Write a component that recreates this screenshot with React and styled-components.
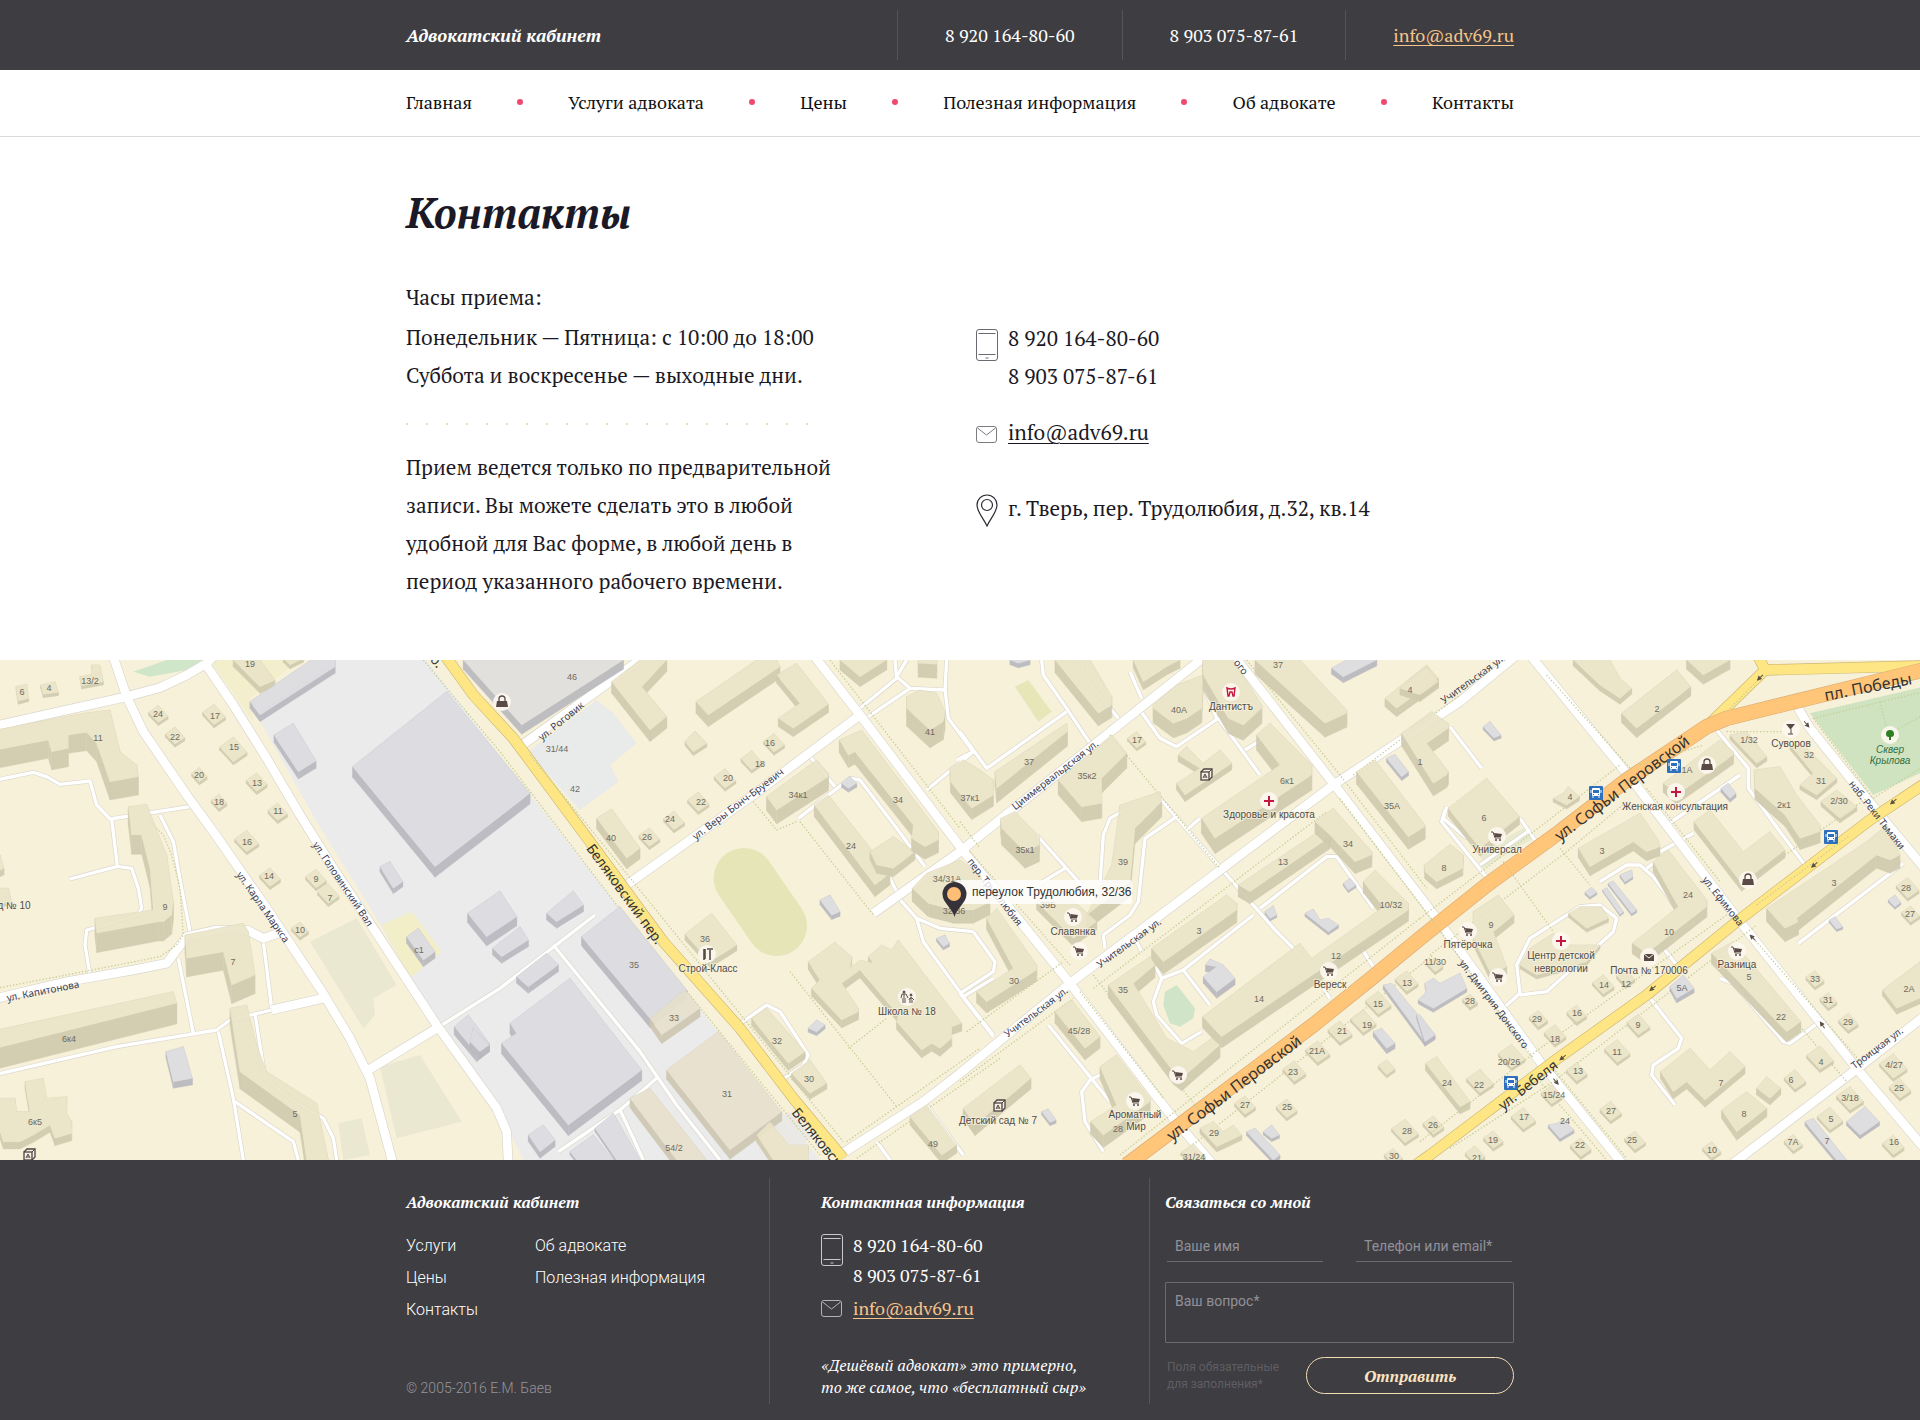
import React from 'react';
import styled, { createGlobalStyle, css } from 'styled-components';

const serif = '"PT Serif", "Liberation Serif", serif';
const sans = 'Roboto, "Liberation Sans", sans-serif';
const ink = '#1b1925';
const dark = '#3e3d42';
const sand = '#f6c58a';

const GlobalStyle = createGlobalStyle`
  *, *::before, *::after { box-sizing: border-box; }
  body { margin: 0; background: #fff; color: ${ink}; font-family: ${serif}; }
  h1, h2, p, ul { margin: 0; padding: 0; }
  ul { list-style: none; }
  a { color: inherit; text-decoration: none; }
`;

const Container = styled.div`
  max-width: 1108px;
  margin: 0 auto;
`;

/* ---------- header ---------- */

const TopBar = styled.header`
  background: ${dark};
  color: #fff;
`;

const TopInner = styled(Container)`
  display: flex;
  align-items: center;
  height: 70px;
`;

const Brand = styled.a`
  flex: 1;
  font-size: 18px;
  font-weight: 700;
  font-style: italic;
  line-height: 24px;
`;

const TopContact = styled.a`
  display: flex;
  align-items: center;
  height: 50px;
  padding: 0 ${({ $last }) => ($last ? 0 : 47)}px 0 47px;
  border-left: 1px solid #55545a;
  font-size: 18px;
  white-space: nowrap;
`;

const MailText = styled.span`
  color: ${({ $color }) => $color || sand};
  text-decoration: underline;
  text-decoration-thickness: 1px;
  text-underline-offset: 3px;
`;

const Nav = styled.nav`
  border-bottom: 1px solid #d9dadb;
`;

const NavList = styled(Container).attrs({ as: 'ul' })`
  display: flex;
  align-items: center;
  justify-content: space-between;
  height: 66px;
  padding-bottom: 2px;
  font-size: 18px;
  color: #111;
`;

const Dot = styled.li`
  width: 6px;
  height: 6px;
  border-radius: 50%;
  background: #f0486e;
`;

/* ---------- contacts ---------- */

const Main = styled(Container).attrs({ as: 'main' })`
  padding: 45px 0 60px;
`;

const Title = styled.h1`
  font-size: 42px;
  line-height: 60px;
  font-style: italic;
  font-weight: 700;
`;

const Columns = styled.div`
  display: grid;
  grid-template-columns: 570px 1fr;
  margin-top: 36px;
  font-size: 21px;
  line-height: 38px;
`;

const Lead = styled.p`
  margin-bottom: 2px;
`;

const DottedRule = styled.div`
  width: 410px;
  height: 2px;
  margin: 29px 0 23px;
  background: repeating-linear-gradient(90deg, #eddcb4 0 2px, transparent 2px 20px);
`;

const Notice = styled.p`
  max-width: 436px;
`;

const ContactList = styled.ul`
  padding-top: 41px;
`;

const ContactItem = styled.li`
  display: flex;
  gap: 10px;
  margin-bottom: ${({ $gap }) => $gap || 0}px;

  svg {
    flex: none;
    margin-top: ${({ $iconTop }) => $iconTop}px;
  }
`;

/* ---------- map ---------- */

const MapBox = styled.section`
  height: 500px;
  overflow: hidden;

  svg {
    display: block;
    width: 100%;
    height: 100%;
  }
`;

const HouseNumber = styled.text`
  font-family: "Liberation Sans", sans-serif;
  font-size: 9px;
  fill: #6d6a62;
  text-anchor: middle;
`;

const PlaceName = styled.text`
  font-family: "Liberation Sans", sans-serif;
  font-size: 10px;
  fill: #4f4b4b;
  text-anchor: middle;
  paint-order: stroke;
  stroke: #f7f1dacc;
  stroke-width: 2px;
  ${({ $park }) => $park && css`
    fill: #2f7040;
    font-style: italic;
    stroke: #cfe3c5;
  `}
`;

const StreetName = styled.text`
  font-family: "Noto Sans", "Open Sans", sans-serif;
  font-size: ${({ $size }) => $size}px;
  fill: ${({ $size }) => ($size > 10 ? '#333' : '#3d3d52')};
  text-anchor: middle;
`;

const MarkerText = styled.text`
  font-family: "Liberation Sans", sans-serif;
  font-size: 12px;
  fill: #333;
`;

/* ---------- footer ---------- */

const Footer = styled.footer`
  background: ${dark};
  color: #fff;
`;

const FooterInner = styled(Container)`
  display: grid;
  grid-template-columns: 363px 380px 1fr;
  padding: 18px 0 16px;
`;

const FooterCol = styled.section`
  display: flex;
  flex-direction: column;
  min-height: 226px;
  padding: 12px 0 6px ${({ $left }) => $left || 0}px;
  border-left: ${({ $left }) => ($left ? '1px solid #55545a' : '0')};
`;

const FooterTitle = styled.h2`
  margin-bottom: 16px;
  font-size: 16px;
  line-height: 24px;
  font-style: italic;
  font-weight: 700;
`;

const FooterLinks = styled.ul`
  display: grid;
  grid-template-columns: 129px 1fr;
  font-family: ${sans};
  font-weight: 300;
  font-size: 16px;
  line-height: 32px;
`;

const Copyright = styled.p`
  margin-top: auto;
  color: #96959d;
  font-family: ${sans};
  font-weight: 300;
  font-size: 14px;
  line-height: 20px;
`;

const FooterContacts = styled.ul`
  font-size: 18px;
  line-height: 30px;
`;

const Quote = styled.p`
  margin-top: auto;
  font-size: 16px;
  line-height: 22px;
  font-style: italic;
`;

const Form = styled.form`
  display: flex;
  flex-direction: column;
  flex: 1;
`;

const FieldRow = styled.div`
  display: flex;
  gap: 33px;
  padding: 0 2px;
`;

const field = css`
  display: block;
  width: 100%;
  padding: 0 8px;
  background: none;
  color: #fff;
  font-family: ${sans};
  font-size: 14px;
  outline: 0;

  &::placeholder {
    color: #929198;
    opacity: 1;
  }
`;

const Input = styled.input`
  ${field}
  min-width: 0;
  height: 32px;
  border: 0;
  border-bottom: 1px solid #6b6a70;
`;

const Textarea = styled.textarea`
  ${field}
  height: 61px;
  margin-top: 20px;
  padding: 8px 9px;
  border: 1px solid #6b6a70;
  border-radius: 1px;
  line-height: 20px;
  resize: none;
`;

const SubmitRow = styled.div`
  display: flex;
  align-items: center;
  justify-content: space-between;
  margin-top: 14px;
  padding-left: 2px;
`;

const Hint = styled.p`
  color: #5f5e64;
  font-family: ${sans};
  font-size: 12px;
  line-height: 17px;
`;

const Submit = styled.button`
  width: 208px;
  height: 37px;
  border: 1px solid #f5ddb4;
  border-radius: 19px;
  background: none;
  color: #fbe3c0;
  font-family: ${serif};
  font-size: 16px;
  font-weight: 700;
  font-style: italic;
  cursor: pointer;
`;

/* ---------- icons ---------- */

const PhoneIcon = ({ color = '#6b6a72' }) => (
  <svg width="22" height="32" viewBox="0 0 22 32" fill="none" stroke={color} aria-hidden="true">
    <rect x="0.5" y="0.5" width="21" height="31" rx="2.5" />
    <path d="M2.5 4.5h17M2.5 25.5h17M9.5 29h3" />
  </svg>
);

const MailIcon = ({ color = '#7c7b82' }) => (
  <svg width="22" height="18" viewBox="0 0 22 18" fill="none" stroke={color} aria-hidden="true">
    <rect x="0.5" y="0.5" width="20" height="16" rx="2.5" />
    <path d="M1.5 2l9 7 9-7" />
  </svg>
);

const PinIcon = () => (
  <svg width="22" height="33" viewBox="0 0 22 33" fill="none" stroke="#2b2a33" strokeWidth="1.2" aria-hidden="true">
    <path d="M11 32C8 25 1 18 1 11a10 10 0 0 1 20 0c0 7-7 14-10 21z" />
    <circle cx="11" cy="11" r="5.5" />
  </svg>
);

/* ---------- map data: every tile is drawn at 3x, x is its left edge ---------- */

const tiles = [
  {
    x: 0,
    areas: [
      ['1010,15 1280,15 1440,225 1850,750 2460,1515 1570,1515 1500,1370 1310,1110 1145,815 950,500 770,180', '#ebebeb'],
      ['630,15 900,15 750,130 760,200', '#f3eecb'],
      ['930,860 1070,790 1190,990 1120,1030 1125,1080 1090,1120', '#eae8d0'],
      ['1140,1235 1260,1200 1385,1400 1190,1450', '#eae8d0'],
      ['1015,1405 1085,1390 1110,1500 1030,1515', '#eae8d0'],
      ['400,50 500,15 610,15 560,45 450,65', '#cfe6c8'],
      ['1145,810 1235,770 1325,890 1230,970', '#f2eec8'],
    ],
    minor: [
      '-10,375 100,352 140,365 180,388 270,378 290,450 330,492 570,455',
      '335,492 352,632',
      '210,672 352,634 395,640 415,700 425,760 415,780 300,815 260,825 255,870 270,960',
      '480,480 520,560 545,700 570,830',
      '535,910 580,1135',
      '-10,1258 350,1175 650,1125 690,1095 815,1065',
      '790,860 815,1060',
      '655,1130 700,1330 730,1515',
      '705,1340 880,1460 895,1515',
      '765,1075 795,1270 870,1330 970,1390 1000,1450 1010,1515',
      '1310,1120 1500,1000 1785,780',
    ],
    major: [
      '-10,212 200,165 380,125 480,98 560,60 620,25 640,5',
      '340,5 380,125 430,230 560,420 640,530 800,760 960,1000 1050,1150 1110,1270 1180,1530',
      '615,25 700,150 800,310 900,480 1000,640 1120,820 1310,1110 1440,1290 1490,1360 1520,1430 1525,1530',
      '-10,1030 200,980 400,945 500,925 560,845 650,825 740,825 790,850 850,830',
      '1105,1245 1310,1120',
      '815,1065 970,1030',
    ],
    yellow: [],
    orange: [],
    dots: [
      '-10,1000 250,950 480,905 530,870 550,840 540,700 515,600 490,540 440,490',
      '1270,15 1340,100 1500,290 1850,750 2460,1500',
    ],
    buildings: [
      ['-10,225 250,175 330,165 360,290 410,330 415,365 330,380 290,265 260,232 205,240 205,280 155,290 145,255 -10,285', 55],
      ['385,455 440,448 500,600 520,740 515,780 490,800 475,800 290,835 285,790 460,765 450,640 425,540 395,540', 58],
      ['555,840 730,805 745,830 765,960 695,990 670,890 560,910', 56],
      ['-10,1125 520,1010 530,1045 -10,1180', 62],
      ['690,1060 740,1050 770,1170 800,1250 950,1345 985,1515 920,1515 900,1380 720,1250', 52],
      ['75,1280 130,1270 140,1330 200,1325 200,1375 215,1400 215,1435 165,1450 150,1410 100,1440 60,1460 10,1460 -10,1400 -10,1330 45,1330 50,1370 90,1370', 22],
      ['700,15 780,15 825,75 780,95', 20],
      ['850,10 910,10 870,30', 12],
      ['-10,600 0,600 12,640 -10,650', 20],
      ['-10,700 25,700 35,740 -10,750', 10],
      ['750,140 940,10 1005,15 1005,35 780,180', 20, 'grey'],
      ['822,240 880,205 948,318 895,350', 22, 'grey'],
      ['1058,335 1340,110 1590,415 1305,635', 32, 'grey'],
      ['1140,635 1170,620 1208,680 1180,700', 16, 'grey'],
      ['1403,775 1500,708 1550,785 1460,845', 28, 'grey'],
      ['1220,845 1255,820 1305,890 1270,915', 20, 'grey'],
      ['1363,1115 1405,1080 1468,1165 1430,1195', 25, 'grey'],
      ['498,1190 550,1175 577,1270 520,1280', 20, 'grey'],
      ['48,95 80,88 86,130 55,138', 10],
      ['122,90 165,80 175,112 130,118', 10],
      ['240,65 275,58 275,30 300,30 310,80 245,92', 10],
    ],
    houses: [[475, 178], [525, 243], [642, 180, 38], [700, 285, 46], [598, 360, 26], [770, 383, 34], [657, 440, 26], [833, 472, 32], [740, 560, 40], [810, 668, 34], [948, 672, 34], [985, 718, 36], [900, 825, 28]],
    numbers: [[67, 112, '6'], [148, 100, '4'], [269, 77, '13/2'], [475, 178, '24'], [525, 246, '22'], [644, 184, '17'], [702, 276, '15'], [598, 359, '20'], [770, 384, '13'], [657, 440, '18'], [833, 467, '11'], [741, 561, '16'], [806, 663, '14'], [948, 673, '9'], [991, 730, '7'], [900, 825, '10'], [295, 248, '11'], [494, 757, '9'], [699, 920, '7'], [206, 1152, '6к4'], [106, 1400, '6к5'], [886, 1378, '5'], [749, 27, '19'], [1257, 884, 'с1']],
    places: [[42, 752, 'д № 10']],
    streets: [[790, 755, 55, 'ул. Карла Маркса'], [1028, 688, 56, 'ул. Головинский Вал'], [130, 1008, -11, 'ул. Капитонова']],
    icons: [['kids', 88, 1500]],
  },
  {
    x: 1440,
    areas: [
      ['145,290 350,135 400,175 470,265 390,330 415,380 300,465', '#e9eaea'],
      ['865,1410 930,1370 1000,1450 930,1480', '#eae9e6'],
    ],
    minor: [
      '1140,160 1250,70 1245,15',
      '1250,65 1290,100 1395,105 1400,15',
      '1250,65 1280,15',
      '1395,100 1405,190 1480,290 1340,405',
      '1165,185 1290,100',
      '220,870 480,1190 590,1350 720,1515',
      '530,1270 420,1365 235,1490',
      '420,1365 460,1450 490,1515',
      '775,1110 860,1050 900,1070 985,1200 970,1230 905,1275',
      '990,305 1065,395',
      '955,490 1110,370 1140,375 1250,520 1335,635',
      '1220,650 1265,740 1310,790 1330,860 1450,1025 1540,1140',
      '1310,790 1380,820 1480,830',
      '1450,1025 1540,970',
      '1335,1345 1450,1500',
      '1190,1460 1230,1515',
    ],
    major: [
      '120,275 500,0',
      '440,690 820,420 1140,180',
      '1000,0 1140,180 1440,575 1770,985 2080,1390 2200,1530',
      '1180,775 1440,590 2180,0',
      '1080,1500 1330,1340 1440,1255 1770,985 2560,390 2940,140 3110,0',
    ],
    yellow: ['-110,-5 -20,120 100,250 330,560 550,860 780,1120 940,1330 1090,1510'],
    orange: [],
    dots: [
      '960,500 1180,780', '930,950 1250,1355', '1105,1180 1220,1090', '150,300 330,520 1090,1460',
      '1050,15 1440,520', '820,440 890,525 950,500', '1100,1460 1500,1180', '1130,1510 1560,1210',
    ],
    buildings: [
      ['-50,15 430,15 125,210', 28, 'warm'],
      ['395,80 480,15 560,15 485,95 560,185 510,225', 35],
      ['648,140 830,15 890,15 900,35 685,180', 35],
      ['890,60 950,25 1045,148 940,220 895,190 960,145', 25],
      ['1080,15 1220,15 1140,65', 30],
      ['1315,10 1370,10 1370,28 1315,25', 42],
      ['1280,125 1320,105 1370,115 1395,170 1390,200 1350,225 1280,160', 54],
      ['615,260 645,228 680,265 640,290', 12],
      ['860,425 1010,315 1045,355 1045,365 890,465', 42],
      ['1003,450 1045,420 1230,655 1185,690', 35],
      ['1170,590 1240,545 1305,590 1240,640 1190,630', 25],
      ['1078,255 1145,225 1375,530 1375,555 1335,575 1295,550 1300,510 1125,290 1105,300', 38],
      ['350,490 395,462 480,580 440,610', 32],
      ['615,838 695,775 770,870 690,920', 18],
      ['985,920 1065,862 1115,905 1110,940 1140,915 1180,925 1165,905 1205,870 1235,885 1255,855 1445,1105 1415,1115 1415,1150 1380,1180 1355,1165 1325,1185 1250,1100 1255,1080 1140,945 1085,985 1135,1060 1135,1070 1085,1095 995,1000 1020,975', 24],
      ['815,1090 860,1060 975,1190 925,1225', 22],
      ['935,1255 990,1215 1040,1285 990,1315', 18],
      ['560,1245 715,1130 905,1370 750,1485', 28, 'warmTan'],
      ['305,845 420,755 620,1005 510,1090', 28, 'grey'],
      ['510,1090 615,1005 660,1060 545,1140', 26, 'warmTan'],
      ['200,775 280,708 310,750 230,800', 20, 'grey'],
      ['38,880 120,815 145,855 65,905', 20, 'grey'],
      ['110,965 200,895 235,930 145,995', 20, 'grey'],
      ['65,1165 110,1135 90,1105 270,970 485,1245 265,1410', 32, 'grey'],
      ['-20,1120 28,1170 0,1190 -30,1160', 20, 'grey'],
      ['145,1440 190,1410 225,1455 180,1490', 20, 'grey'],
      ['270,1490 340,1440 400,1515 290,1515', 10, 'grey'],
      ['345,1420 400,1375 480,1515 410,1515', 10, 'grey'],
      ['450,1330 510,1300 680,1515 590,1515', 28, 'warmTan'],
      ['830,1440 870,1400 925,1470 985,1470 985,1515 880,1515', 22, 'tan'],
      ['1290,1385 1340,1350 1430,1470 1385,1500', 25],
      ['1450,1370 1510,1320 1550,1370 1480,1410', 22],
      ['1020,735 1050,720 1080,770 1055,780', 14, 'grey'],
      ['985,1120 1010,1095 1035,1110 1010,1130', 12, 'grey'],
      ['1370,850 1395,840 1408,865 1390,875', 10, 'grey'],
      ['1085,385 1110,365 1130,385 1105,400', 12, 'grey'],
      ['1297,700 1340,655 1440,615 1500,660 1530,740 1480,765 1420,765 1345,745', 40],
      ['1410,340 1450,315 1500,345 1540,375 1540,420 1475,460 1412,380', 34],
    ],
    houses: [[508, 548, 34], [582, 498, 34], [655, 442, 36], [735, 372, 36], [815, 318, 36], [882, 265, 34]],
    numbers: [[275, 66, '46'], [231, 282, '31/44'], [286, 402, '42'], [393, 550, '40'], [500, 545, '26'], [570, 493, '24'], [664, 440, '22'], [745, 370, '20'], [841, 327, '18'], [871, 265, '16'], [954, 421, '34к1'], [1113, 572, '24'], [1253, 434, '34'], [1349, 230, '41'], [1471, 429, '37к1'], [1400, 672, '34/31А'], [1422, 768, '32/36'], [675, 851, '36'], [462, 931, '35'], [581, 1088, '33'], [741, 1317, '31'], [892, 1158, '32'], [987, 1273, '30'], [581, 1478, '54/2'], [1358, 1467, '49']],
    places: [[683, 940, 'Строй-Класс'], [1282, 1069, 'Школа № 18']],
    streets: [[243, 198, -39, 'ул. Роговик'], [775, 447, -37, 'ул. Веры Бонч-Бруевич'], [435, 718, 54, 'Беляковский пер.', 14], [1010, 1445, 51, 'Беляковск', 14], [-132, 15, 50, 'ю.', 14]],
    icons: [['bag', 65, 142], ['tools', 680, 897], ['school', 1282, 1027]],
  },
  {
    x: 2880,
    areas: [
      ['165,95 205,75 275,170 235,200', '#e7e6b8'],
      ['615,1010 650,990 705,1060 700,1090 660,1115 630,1105 610,1050', '#d0e5c8'],
    ],
    minor: [
      '245,15 250,60 320,160 390,265', '320,170 80,340 0,230', '-10,315 40,290', '365,15 370,60 475,190',
      '510,50 545,130', '540,165 600,250 650,275 775,190 900,360', '730,90 770,190', '855,285 910,250',
      '680,525 720,490', '420,690 430,540 450,490 520,450', '650,485 555,550 535,740 510,780 430,840 435,880',
      '230,540 400,730', '600,430 800,660 950,830 1040,920', '900,760 1100,605 1130,605 1240,760',
      '585,930 605,970 580,1040 590,1080 665,1165 725,1130', '605,970 670,945 750,1050', '670,945 880,780',
      '0,1015 100,1145', '0,1015 100,950 105,920 40,830', '265,1110 450,1340', '450,1245 390,1275 365,1310 375,1400 430,1490',
      '1205,880 1240,935', '1090,1000 1110,1030', '315,640 240,685', '1520,550 1450,490 1460,455',
      '530,860 545,890',
    ],
    major: ['820,0 1120,385 1430,790 1740,1220 1990,1530'],
    yellow: [],
    orange: ['500,1530 700,1380 1060,1110 1240,965 1380,850 1580,690 1800,530 2000,375 2240,215 2300,190 2890,45'],
    dots: [
      '860,15 1140,360 1400,700', '1140,430 1420,800', '480,1500 1380,790', '660,1500 1420,900', '30,590 330,930',
      '400,960 720,1370', '360,1010 610,1330', '400,1000 1100,470', '450,240 780,640', '0,500 60,580', '20,1130 310,920',
      '0,1280 340,1030', '1180,360 1500,120',
    ],
    buildings: [
      ['285,15 390,15 455,125 455,150 415,175', 38],
      ['520,15 660,15 620,35 550,80', 25],
      ['1115,40 1160,15 1250,15 1150,65', 18, 'grey'],
      ['150,15 210,15 175,25', 14, 'grey'],
      ['105,350 320,205 322,230 110,400', 44],
      ['295,375 455,240 500,295 425,370 425,445 365,455', 45],
      ['580,150 650,90 730,60 725,160 680,190 640,205 580,160', 44],
      ['728,15 820,15 905,150 905,160 850,210 805,190 730,60', 46],
      ['885,15 1020,15 1160,165 1160,175 1095,205', 42],
      ['1275,130 1400,30 1435,70 1310,160', 25],
      ['650,385 720,340 655,300 680,275 730,325 780,285 815,325 675,420', 20],
      ['890,240 930,205 1055,330 1055,360 765,550 725,490 960,330', 46],
      ['480,450 600,410 605,440 525,520 510,680 380,780 455,630', 46],
      ['122,490 165,470 238,545 238,570 195,590 125,520', 50],
      ['230,740 300,700 410,800 340,850', 24],
      ['80,790 110,760 230,930 230,945 80,1040 50,1010 160,940', 34],
      ['835,690 1090,520 1110,545 870,710', 36],
      ['575,880 800,720 830,745 830,765 610,920', 38],
      ['1065,500 1120,460 1235,590 1235,600 1185,620 1110,540', 36],
      ['1210,680 1245,645 1345,745 1345,765 785,1145 728,1085 1020,865 1055,910 1210,800 1270,755', 34],
      ['445,990 570,905 585,930 520,985 620,1150 700,1190 755,1150 780,1170 665,1270 640,1250', 38],
      ['285,1070 335,1035 420,1145 375,1180', 35],
      ['10,1360 180,1230 213,1270 45,1410', 32],
      ['420,1235 470,1200 570,1330 570,1340 430,1440 392,1400 470,1350', 38],
      ['730,965 770,935 737,930 750,912 790,930 825,970 770,1010', 20, 'grey'],
      ['1190,350 1245,315 1395,510 1395,515 1345,545', 38],
      ['1325,235 1415,170 1465,205 1465,220 1400,265 1465,350 1460,360 1420,385', 38],
      ['1393,630 1470,568 1510,600 1508,640 1430,680 1395,650', 22],
      ['1280,310 1305,298 1345,350 1325,365', 12, 'grey'],
      ['1150,685 1170,670 1188,690 1165,705', 8, 'grey'],
      ['1035,775 1060,762 1080,795 1105,790 1135,810 1105,830', 10, 'grey'],
      ['915,770 940,752 950,780 930,790', 8, 'grey'],
      ['1270,990 1295,985 1425,1140 1395,1160', 14, 'grey'],
      ['1375,1035 1400,1010 1395,985 1420,970 1440,985 1500,955 1520,1000 1420,1060', 12, 'grey'],
      ['1240,1130 1265,1120 1305,1165 1280,1180', 16, 'grey'],
      ['1397,1225 1430,1205 1530,1340 1500,1355', 22],
      ['720,1420 760,1400 790,1430 820,1410 845,1440 770,1475', 16],
      ['860,1430 885,1420 960,1500 940,1515', 12, 'grey'],
      ['910,1430 935,1410 958,1440 935,1450', 10, 'grey'],
      ['245,1370 265,1362 288,1395 270,1402', 10, 'grey'],
    ],
    houses: [[530, 255, 30], [1340, 980, 38], [1255, 1045, 42], [1210, 1100, 42], [1140, 1132, 40], [1073, 1192, 40], [1003, 1250, 38], [855, 1352, 34], [980, 1362, 34], [1425, 930, 26], [1335, 1430, 44], [1420, 1412, 34], [1280, 1238, 28], [700, 1500, 40], [1300, 1505, 30]],
    numbers: [[208, 322, '37'], [380, 362, '35к2'], [194, 585, '35к1'], [530, 254, '17'], [656, 165, '40А'], [955, 29, '37'], [981, 378, '6к1'], [1350, 106, '4'], [1379, 320, '1'], [1296, 453, '35А'], [1165, 566, '34'], [968, 622, '13'], [490, 620, '39'], [264, 750, '39Б'], [716, 827, '3'], [162, 977, '30'], [490, 1004, '35'], [898, 1031, '14'], [1129, 902, '12'], [1294, 749, '10/32'], [356, 1129, '45/28'], [1425, 921, '11/30'], [1340, 983, '13'], [1255, 1048, '15'], [1221, 1111, '19'], [1145, 1129, '21'], [1072, 1187, '21А'], [1000, 1250, '23'], [855, 1349, '27'], [981, 1357, '25'], [1340, 1427, '28'], [1420, 1411, '26'], [1460, 1284, '24'], [762, 1435, '29'], [703, 1506, '31/24'], [475, 1421, '28'], [1301, 1502, '30'], [1452, 638, '8']],
    places: [[813, 154, 'Дантистъ'], [928, 478, 'Здоровье и красота'], [340, 829, 'Славянка'], [1111, 990, 'Вереск'], [115, 1397, 'Детский сад № 7'], [526, 1380, 'Ароматный'], [527, 1416, 'Мир']],
    streets: [[285, 360, -38, 'Циммервальдская ул.'], [508, 865, -36, 'Учительская ул.'], [228, 1070, -37, 'Учительская ул.'], [105, 710, 52, 'пер. Трудолюбия'], [843, 35, 52, 'ого'], [822, 1300, -37, 'ул. Софьи Перовской', 16]],
    icons: [['tooth', 812, 111], ['kids', 738, 361], ['cross', 928, 437], ['cart', 338, 787], ['cart', 357, 887], ['cart', 1107, 948], ['cart', 654, 1261], ['cart', 526, 1339], ['kids', 117, 1353]],
  },
  {
    x: 4260,
    areas: [
      ['1170,175 1510,95 1510,350 1360,420', '#cfe3c0'],
      ['180,590 310,520 340,550 190,640', '#e8ead0'],
    ],
    minor: [
      '90,215 185,340', '345,555 300,490', '330,525 180,630', '210,680 65,500 75,465', '540,680 620,630 660,630 700,665 770,760',
      '740,510 960,360', '720,590 820,535', '890,225 985,340 985,400 1080,530 1155,630', '1450,625 1135,865',
      '250,1060 300,1015 290,930 330,850 480,755 540,750 590,790 580,830 380,1010 300,1020',
      '690,1030 785,1150 775,1180 700,1230 695,1260 765,1350', '900,970 940,985 1090,1160 1110,1165 1200,1100',
      '730,880 770,930', '680,640 700,625',
    ],
    major: [
      '330,0 640,380 960,800 1310,1240 1530,1500',
      '920,1540 1300,1250 1530,1070',
      '1135,160 1170,220 1380,480 1530,660',
    ],
    yellow: ['-70,1570 30,1500 400,1220 680,1020 950,800 1350,495 1530,375', '870,205 1035,45 1010,-5', '1035,45 1530,32'],
    orange: [],
    dots: [
      '0,790 380,500 600,330', '30,900 440,590 620,440', '420,580 510,690', '250,620 400,830', '40,800 340,1210', '90,1480 400,1280 1010,810',
      '0,1460 360,1180 920,780', '380,60 640,350', '680,400 900,680', '1180,190 1510,110', '1180,190 1360,430 1500,340',
      '1000,850 1330,1230', '960,900 1280,1280', '400,1240 620,1510', '1380,140 1400,220 1440,260', '1400,240 1510,180',
      '660,330 850,270', '920,230 1120,230', '1030,60 920,170', '1010,750 1290,540', '980,680 1340,430', '360,1280 560,1515',
    ],
    buildings: [
      ['-60,100 20,35 55,80 0,120', 20],
      ['85,460 200,370 298,485 180,580', 24],
      ['460,15 570,15 600,70 635,100 600,130 540,90', 18],
      ['605,175 770,45 812,95 650,220', 28],
      ['800,15 930,15 850,60', 28],
      ['730,385 900,255 940,290 940,300 770,420', 28],
      ['930,240 980,230 1040,305 1010,325', 14],
      ['1003,345 1080,335 1130,420 1200,510 1200,530 1140,550 1095,480 1005,400', 34],
      ['1140,390 1180,355 1110,270 1150,270 1250,370 1190,420', 14],
      ['1203,440 1250,405 1310,455 1260,490', 14],
      ['822,500 870,465 970,590 1050,530 1095,585 965,685', 24],
      ['475,580 660,475 715,555 720,575 680,590 640,560 510,635', 28],
      ['700,620 745,585 860,735 860,755 680,895 637,865 775,755', 32],
      ['1040,760 1340,560 1400,510 1440,600 1410,615 1370,600 1130,790 1135,800 1095,820', 40],
      ['160,770 235,720 282,780 220,830 260,935 215,960 160,850', 24],
      ['300,930 330,880 400,835 430,870 540,870 500,920 350,960', 12],
      ['445,775 480,755 545,755 565,790 500,820', 12],
      ['548,705 560,698 610,770 600,778', 6, 'grey'],
      ['565,685 580,678 650,765 635,775', 8, 'grey'],
      ['600,660 635,645 638,665 615,680', 8, 'grey'],
      ['495,712 515,697 530,712 510,725', 8, 'grey'],
      ['190,215 210,200 243,240 222,248', 10, 'grey'],
      ['903,400 925,385 948,415 930,430', 12, 'grey'],
      ['875,895 940,860 1142,1100 1100,1130', 32],
      ['750,995 790,960 822,1000 770,1030', 14, 'grey'],
      ['722,1250 810,1180 870,1245 930,1190 975,1235 855,1335 800,1280 760,1310', 22],
      ['1010,1300 1040,1265 1082,1300 1050,1330', 20],
      ['905,1365 980,1310 1040,1360 950,1430', 26],
      ['1388,1005 1500,920 1520,1020 1430,1060', 18],
      ['1155,1400 1180,1390 1280,1515 1250,1515', 12, 'grey'],
      ['1280,1400 1335,1355 1378,1400 1320,1440', 12, 'grey'],
      ['385,1410 410,1405 430,1395 462,1425 420,1450', 10, 'grey'],
      ['1228,795 1245,785 1268,815 1250,822', 8, 'grey'],
      ['1405,735 1425,720 1442,742 1425,755', 8, 'grey'],
      ['-10,1080 0,1080 45,1140 15,1160', 12, 'grey'],
      ['400,430 430,415 445,395 478,425 440,450', 12],
    ],
    houses: [[150, 1038, 24], [355, 1092, 30], [470, 1078, 32], [405, 1140, 36], [655, 1110, 38], [550, 990, 36], [617, 968, 30], [592, 1190, 42], [470, 1252, 34], [275, 1205, 44], [180, 1280, 44], [395, 1320, 34], [310, 1392, 40], [220, 1455, 32], [572, 1370, 36], [645, 1458, 34], [482, 1478, 34], [875, 1485, 30], [1120, 1464, 30], [1230, 1392, 42], [1290, 1332, 44], [1200, 1210, 44], [1125, 1275, 36], [1185, 972, 30], [1225, 1037, 28], [1285, 1102, 32], [1420, 1235, 46], [1440, 1302, 36], [1420, 1472, 36], [1463, 700, 38], [1472, 778, 30], [165, 1500, 32]],
    numbers: [[193, 490, '6'], [449, 426, '4'], [712, 163, '2'], [800, 346, '1А'], [986, 255, '1/32'], [1168, 300, '32'], [1204, 378, '31'], [1258, 437, '2/30'], [1093, 451, '2к1'], [546, 587, '3'], [803, 719, '24'], [747, 832, '10'], [1241, 685, '3'], [214, 811, '9'], [1459, 700, '28'], [1470, 778, '27'], [1467, 1001, '2А'], [1186, 971, '33'], [1225, 1034, '31'], [1285, 1101, '29'], [986, 967, '5'], [1083, 1085, '22'], [787, 1000, '5А'], [619, 986, '12'], [551, 991, '14'], [470, 1074, '16'], [351, 1092, '29'], [151, 1037, '28'], [405, 1152, '18'], [655, 1111, '9'], [590, 1192, '11'], [473, 1247, '13'], [268, 1220, '20/26'], [403, 1319, '15/24'], [177, 1289, '22'], [311, 1386, '17'], [220, 1454, '19'], [172, 1508, '21'], [434, 1397, '24'], [572, 1367, '27'], [637, 1454, '25'], [481, 1470, '22'], [903, 1283, '7'], [973, 1378, '8'], [876, 1486, '10'], [1204, 1222, '4'], [1112, 1276, '6'], [1233, 1393, '5'], [1290, 1330, '3/18'], [1220, 1458, '7'], [1120, 1461, '7А'], [1421, 1230, '4/27'], [1437, 1298, '25'], [1421, 1461, '16']],
    places: [[232, 585, 'Универсал'], [766, 456, 'Женская консультация'], [1112, 265, 'Суворов'], [144, 870, 'Пятёрочка'], [424, 903, 'Центр детской'], [424, 940, 'неврологии'], [687, 948, 'Почта № 170006'], [950, 929, 'Разница'], [1411, 283, 'Сквер', true], [1411, 317, 'Крылова', true]],
    streets: [[160, 72, -36, 'Учительская ул.'], [607, 400, -37, 'ул. Софьи Перовской', 16], [1343, 95, -11, 'пл. Победы', 16], [1370, 480, 52, 'наб. Реки Тьмаки'], [908, 738, 52, 'ул. Ефимова'], [222, 1048, 53, 'ул. Дмитрия Донского'], [325, 1290, -38, 'ул. Бебеля', 14], [1370, 1178, -37, 'Троицкая ул.']],
    icons: [['bus', 763, 332], ['bus', 529, 414], ['bus', 1233, 547], ['bus', 274, 1283], ['bag', 860, 329], ['bag', 984, 676], ['cross', 768, 410], ['cross', 424, 859], ['cart', 231, 543], ['cart', 145, 828], ['cart', 233, 965], ['cart', 950, 887], ['glass', 1114, 222], ['tree', 1411, 240], ['mail', 687, 906]],
  },
];

const arrows = [[5280, 68, 135], [5680, 440, 140], [5443, 630, 140], [4958, 1000, 140], [4688, 1208, 140], [5258, 848, 225], [5467, 1110, 235], [4668, 1280, 50], [5420, 208, 50]];

const palette = {
  tan: ['#ebe4c8', '#d0caaf'],
  grey: ['#dcdce1', '#b9b9bf'],
  warm: ['#e1dfdd', '#bab9bd'],
  warmTan: ['#e8e1cd', '#cdc7b2'],
};

const toPoints = str => str.split(' ').map(p => p.split(',').map(Number));

// A roof polygon with its walls dropped straight down
const Building = ({ points, height, kind = 'tan' }) => {
  const [roof, wall] = palette[kind];
  const pts = toPoints(points);
  const walls = pts.map(([x, y], i) => {
    const [nx, ny] = pts[(i + 1) % pts.length];
    return `M${x} ${y}L${nx} ${ny}V${ny + height}L${x} ${y + height}Z`;
  });
  return (
    <g opacity="0.92">
      {walls.map((d, i) => <path key={i} d={d} fill={wall} stroke={wall} />)}
      <polygon points={points} fill={roof} stroke={roof} />
    </g>
  );
};

const House = ({ x, y, size = 32 }) => {
  const points = [[-0.9, -0.2], [0, -0.85], [0.9, 0.15], [0, 0.75]]
    .map(([dx, dy]) => `${x + Math.round(dx * size)},${y + Math.round(dy * size)}`)
    .join(' ');
  return <Building points={points} height={10} />;
};

const glyphs = {
  cart: (
    <g>
      <path d="M-6-4h2l2 6h6" fill="none" stroke="#594a46" />
      <path d="M-3-3l8 1-1 3h-6z" fill="#594a46" />
      <circle cx="-1" cy="4" r="1" fill="#594a46" />
      <circle cx="3" cy="4" r="1" fill="#594a46" />
    </g>
  ),
  bag: (
    <g>
      <path d="M-5-1h10l1 6h-12z" fill="#594a46" />
      <path d="M-3-1v-2a3 3 0 0 1 6 0v2" fill="none" stroke="#594a46" strokeWidth="1.3" />
    </g>
  ),
  cross: <path d="M-5 0h10M0-5v10" stroke="#c4163f" strokeWidth="2" />,
  tooth: <path d="M-4-4q4 2 8 0l-1 8h-1l-1-4h-2l-1 4h-1z" fill="none" stroke="#c4163f" strokeWidth="1.4" />,
  glass: (
    <g>
      <path d="M-5-5h9l-4 5h-1z" fill="#594a46" />
      <path d="M0 0v5M-3 5h5" stroke="#594a46" />
    </g>
  ),
  tree: <path d="M-4-1a4 4 0 0 1 8 0q0 3-3 3v3h-2v-3q-3 0-3-3z" fill="#2e7f22" />,
  mail: (
    <g>
      <rect x="-5" y="-3" width="10" height="7" fill="#594a46" />
      <path d="M-5-3l5 4 5-4" fill="none" stroke="#f6f0e4" />
    </g>
  ),
  tools: <path d="M-3-5v4M-3-1v7M-2-5v10M3-4v10M0-5h6" stroke="#594a46" strokeWidth="1.6" />,
  school: (
    <g fill="#594a46" stroke="#594a46">
      <circle cx="-3" cy="-5" r="1" />
      <circle cx="4" cy="-2" r="1" />
      <path d="M-3-3v4M-6 1l1-4h4l2 4M-4 1v5M-2 1v5M4 0v3M2 3l1-2h2l2 2M3 3v3M5 3v3" fill="none" />
    </g>
  ),
};

const Poi = ({ type, x, y }) => {
  if (type === 'bus') {
    return (
      <g transform={`translate(${x} ${y})`}>
        <rect x="-7" y="-7" width="14" height="14" rx="1" fill="#2f70bd" />
        <rect x="-4" y="-5" width="8" height="8" rx="1" fill="#fff" />
        <path d="M-3-3h6v3h-6zM-3 1h1v1h-1zM2 1h1v1h-1z" fill="#2f70bd" />
        <path d="M-3 3v2M3 3v2M-5-3v3M5-3v3" stroke="#fff" />
      </g>
    );
  }
  if (type === 'kids') {
    return (
      <g transform={`translate(${x} ${y})`} fill="#f6efe2" stroke="#4d4342" strokeWidth="1.3">
        <path d="M-5-3l3-3h8v8l-3 3" />
        <rect x="-5" y="-3" width="8" height="8" />
        <path d="M3-3l3-3M-3 3l2-4 2 4M-2 2h2" strokeWidth="1" />
      </g>
    );
  }
  return (
    <g transform={`translate(${x} ${y})`}>
      <circle r="9" fill="#fdf7f0" opacity="0.9" />
      {glyphs[type]}
    </g>
  );
};

const Roads = ({ kind, width, casing, fill }) => (
  <g fill="none" strokeLinejoin="round">
    {[[casing, width + 4], [fill, width]].map(([stroke, w]) => tiles.map(tile => (
      <g key={`${w}-${tile.x}`} transform={`translate(${tile.x} 0)`} stroke={stroke} strokeWidth={w}>
        {tile[kind].map(points => <polyline key={points} points={points} />)}
      </g>
    )))}
  </g>
);

const CityMap = () => (
  <svg viewBox="0 0 1920 500" preserveAspectRatio="xMidYMid slice" role="img" aria-label="Карта проезда">
    <rect width="1920" height="500" fill="#f7f1da" />
    <g transform="translate(0 -5) scale(0.33333)">
      {tiles.map(tile => (
        <g key={tile.x} transform={`translate(${tile.x} 0)`}>
          {tile.areas.map(([points, fill]) => <polygon key={points} points={points} fill={fill} />)}
        </g>
      ))}
      <path d="M2232 670L2330 812" stroke="#e6e5b8" strokeWidth="182" strokeLinecap="round" />
      <Roads kind="minor" width={10} casing="#dcd8cc" fill="#fff" />
      <Roads kind="major" width={26} casing="#dad7cd" fill="#fff" />
      <Roads kind="yellow" width={30} casing="#cdb878" fill="#ffe684" />
      <Roads kind="orange" width={42} casing="#dcae74" fill="#ffc579" />
      {tiles.map(tile => (
        <g key={tile.x} transform={`translate(${tile.x} 0)`}>
          {tile.dots.map(points => (
            <polyline key={points} points={points} fill="none" stroke="#c6cd96" strokeWidth="4" strokeDasharray="4 6" />
          ))}
          {tile.buildings.map(([points, height, kind]) => (
            <Building key={points} points={points} height={height} kind={kind} />
          ))}
          {tile.houses.map(([x, y, size]) => <House key={`${x}-${y}`} x={x} y={y} size={size} />)}
        </g>
      ))}
      {arrows.map(([x, y, angle]) => (
        <path key={x} transform={`translate(${x} ${y}) rotate(${angle})`} d="M-12 0h20M0-5l10 5-10 5z" fill="#5a5040" stroke="#5a5040" strokeWidth="3" />
      ))}
    </g>
    {tiles.map((tile) => {
      const at = (x, y) => ({ x: Math.round((tile.x + x) / 3), y: Math.round(y / 3) - 5 });
      return (
        <g key={tile.x}>
          {tile.numbers.map(([x, y, text]) => (
            <HouseNumber key={`${x}-${y}`} {...at(x, y + 9)}>{text}</HouseNumber>
          ))}
          {tile.streets.map(([x, y, angle, text, size = 10]) => {
            const p = at(x, y);
            return (
              <StreetName key={`${x}-${y}`} $size={size} dy="0.35em" transform={`translate(${p.x} ${p.y}) rotate(${angle})`}>
                {text}
              </StreetName>
            );
          })}
          {tile.icons.map(([type, x, y]) => <Poi key={`${x}-${y}`} type={type} {...at(x, y)} />)}
          {tile.places.map(([x, y, text, park]) => (
            <PlaceName key={`${x}-${y}`} $park={park} {...at(x, y + 10)}>{text}</PlaceName>
          ))}
        </g>
      );
    })}
    <rect x="955" y="220" width="177" height="24" rx="2" fill="#fff" opacity="0.8" />
    <path d="M954.500 257c-2-9-12-14-12-23a12 12 0 0 1 24 0c0 9-10 14-12 23z" fill="#35323a" />
    <circle cx="954" cy="234" r="7" fill="#ffbe75" />
    <MarkerText x="972" y="236">переулок Трудолюбия, 32/36</MarkerText>
  </svg>
);

const menu = ['Главная', 'Услуги адвоката', 'Цены', 'Полезная информация', 'Об адвокате', 'Контакты'];
const footerMenu = ['Услуги', 'Об адвокате', 'Цены', 'Полезная информация', 'Контакты'];

const App = () => (
  <>
    <GlobalStyle />
    <TopBar>
      <TopInner>
        <Brand href="#">Адвокатский кабинет</Brand>
        <TopContact href="tel:89201648060">8 920 164-80-60</TopContact>
        <TopContact href="tel:89030758761">8 903 075-87-61</TopContact>
        <TopContact href="mailto:info@adv69.ru" $last><MailText>info@adv69.ru</MailText></TopContact>
      </TopInner>
    </TopBar>
    <Nav>
      <NavList>
        {menu.map((item, i) => (
          <React.Fragment key={item}>
            {i > 0 && <Dot aria-hidden="true" />}
            <li><a href="#">{item}</a></li>
          </React.Fragment>
        ))}
      </NavList>
    </Nav>
    <Main>
      <Title>Контакты</Title>
      <Columns>
        <div>
          <Lead>Часы приема:</Lead>
          <p>Понедельник — Пятница: с 10:00 до 18:00</p>
          <p>Суббота и воскресенье — выходные дни.</p>
          <DottedRule />
          <Notice>
            Прием ведется только по предварительной записи. Вы можете сделать это в любой
            удобной для Вас форме, в любой день в период указанного рабочего времени.
          </Notice>
        </div>
        <ContactList>
          <ContactItem $gap={18} $iconTop={10}>
            <PhoneIcon />
            <div>
              <p>8 920 164-80-60</p>
              <p>8 903 075-87-61</p>
            </div>
          </ContactItem>
          <ContactItem $gap={38} $iconTop={13}>
            <MailIcon />
            <a href="mailto:info@adv69.ru"><MailText $color={ink}>info@adv69.ru</MailText></a>
          </ContactItem>
          <ContactItem $iconTop={5}>
            <PinIcon />
            <p>г. Тверь, пер. Трудолюбия, д.32, кв.14</p>
          </ContactItem>
        </ContactList>
      </Columns>
    </Main>
    <MapBox>
      <CityMap />
    </MapBox>
    <Footer>
      <FooterInner>
        <FooterCol>
          <FooterTitle>Адвокатский кабинет</FooterTitle>
          <FooterLinks>
            {footerMenu.map(item => <li key={item}><a href="#">{item}</a></li>)}
          </FooterLinks>
          <Copyright>© 2005-2016 Е.М. Баев</Copyright>
        </FooterCol>
        <FooterCol $left={51}>
          <FooterTitle>Контактная информация</FooterTitle>
          <FooterContacts>
            <ContactItem $gap={3} $iconTop={4}>
              <PhoneIcon color="#c9c8cc" />
              <div>
                <p>8 920 164-80-60</p>
                <p>8 903 075-87-61</p>
              </div>
            </ContactItem>
            <ContactItem $iconTop={7}>
              <MailIcon color="#b3b2b7" />
              <a href="mailto:info@adv69.ru"><MailText>info@adv69.ru</MailText></a>
            </ContactItem>
          </FooterContacts>
          <Quote>
            «Дешёвый адвокат» это примерно,
            <br />
            то же самое, что «бесплатный сыр»
          </Quote>
        </FooterCol>
        <FooterCol $left={15}>
          <FooterTitle>Связаться со мной</FooterTitle>
          <Form>
            <FieldRow>
              <Input type="text" placeholder="Ваше имя" aria-label="Ваше имя" />
              <Input type="text" placeholder="Телефон или email*" aria-label="Телефон или email" />
            </FieldRow>
            <Textarea placeholder="Ваш вопрос*" aria-label="Ваш вопрос" />
            <SubmitRow>
              <Hint>
                Поля обязательные
                <br />
                для заполнения*
              </Hint>
              <Submit type="button">Отправить</Submit>
            </SubmitRow>
          </Form>
        </FooterCol>
      </FooterInner>
    </Footer>
  </>
);

export default App;
